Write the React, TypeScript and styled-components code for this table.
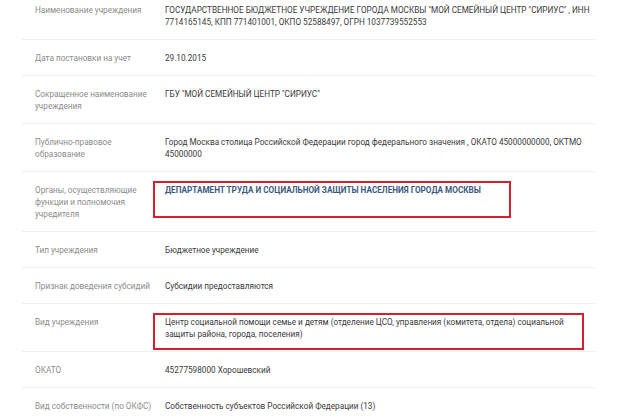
import React from 'react';
import styled, { createGlobalStyle } from 'styled-components';

const GlobalStyle = createGlobalStyle`
  html, body {
    margin: 0;
    padding: 0;
    background: #ffffff;
    overflow: hidden;
  }
  body {
    font-family: Roboto, 'Liberation Sans', sans-serif;
  }
`;

const Table = styled.div`
  width: 573px;
  margin: -8px 0 0 22px;
`;

const Row = styled.div`
  display: flex;
  border-bottom: 1px solid #efefef;
  padding: 12px 0 11px;
  font-size: 8.2px;
  line-height: 12px;
`;

const Label = styled.div`
  flex: 0 0 120px;
  padding-left: 13px;
  padding-right: 10px;
  color: #8c8c8c;
`;

const Value = styled.div`
  position: relative;
  flex: 1;
  color: #3a3a3a;
`;

const OrgLink = styled.a`
  color: #3c5a7d;
  font-weight: 700;
  text-decoration: none;
`;

// red frame drawn over the value, like a marker on the screenshot
const Highlight = styled.span<{ $w: number }>`
  position: absolute;
  left: -12px;
  top: -3px;
  width: ${(p) => p.$w}px;
  height: 37px;
  box-sizing: border-box;
  border: 2.5px solid #d31f2f;
  pointer-events: none;
`;

type Item = {
  label: string;
  value: React.ReactNode;
  mark?: number;
};

const items: Item[] = [
  {
    label: 'Наименование учреждения',
    value:
      'ГОСУДАРСТВЕННОЕ БЮДЖЕТНОЕ УЧРЕЖДЕНИЕ ГОРОДА МОСКВЫ "МОЙ СЕМЕЙНЫЙ ЦЕНТР "СИРИУС" , ИНН 7714165145, КПП 771401001, ОКПО 52588497, ОГРН 1037739552553',
  },
  { label: 'Дата постановки на учет', value: '29.10.2015' },
  { label: 'Сокращенное наименование учреждения', value: 'ГБУ "МОЙ СЕМЕЙНЫЙ ЦЕНТР "СИРИУС"' },
  {
    label: 'Публично-правовое образование',
    value:
      'Город Москва столица Российской Федерации город федерального значения , ОКАТО 45000000000, ОКТМО 45000000',
  },
  {
    label: 'Органы, осуществляющие функции и полномочия учредителя',
    value: <OrgLink href="#">ДЕПАРТАМЕНТ ТРУДА И СОЦИАЛЬНОЙ ЗАЩИТЫ НАСЕЛЕНИЯ ГОРОДА МОСКВЫ</OrgLink>,
    mark: 358,
  },
  { label: 'Тип учреждения', value: 'Бюджетное учреждение' },
  { label: 'Признак доведения субсидий', value: 'Субсидии предоставляются' },
  {
    label: 'Вид учреждения',
    value:
      'Центр социальной помощи семье и детям (отделение ЦСО, управления (комитета, отдела) социальной защиты района, города, поселения)',
    mark: 431,
  },
  { label: 'ОКАТО', value: '45277598000 Хорошевский' },
  { label: 'Вид собственности (по ОКФС)', value: 'Собственность субъектов Российской Федерации (13)' },
];

export default function App() {
  return (
    <>
      <GlobalStyle />
      <Table>
        {items.map((item) => (
          <Row key={item.label}>
            <Label>{item.label}</Label>
            <Value>
              {item.value}
              {item.mark && <Highlight $w={item.mark} />}
            </Value>
          </Row>
        ))}
      </Table>
    </>
  );
}
